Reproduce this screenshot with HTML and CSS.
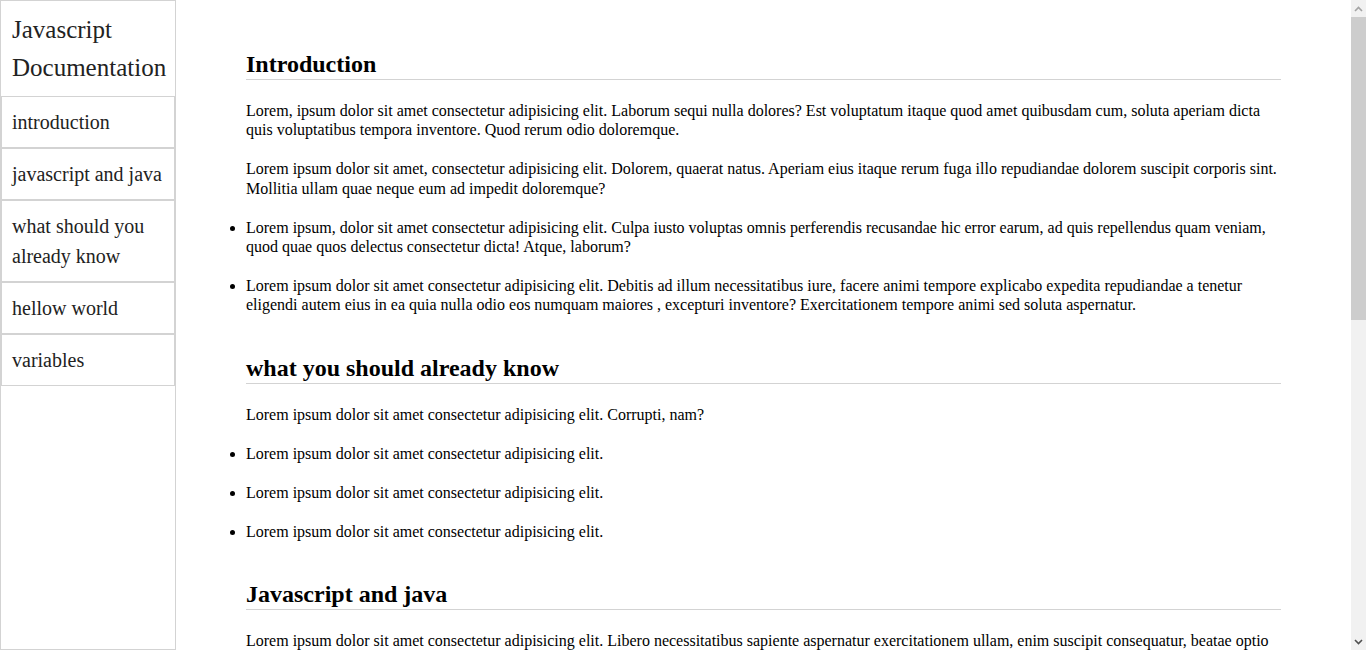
FILE: index.html
```html
<!DOCTYPE html>
<html lang="en">
<head>
<meta charset="utf-8">
<title>Javascript Documentation</title>
<link rel="stylesheet" href="styles.css">
</head>
<body>
<nav class="navbar" id="navbar">
  <header class="nav-header">Javascript Documentation</header>
  <a class="nav-link" href="#introduction">introduction</a>
  <a class="nav-link" href="#javascript_and_java">javascript and java</a>
  <a class="nav-link" href="#what_you_should_already_know">what should you already know</a>
  <a class="nav-link" href="#hellow_world">hellow world</a>
  <a class="nav-link" href="#variables">variables</a>
</nav>
<main class="main-doc" id="main-doc">
  <section class="main-section" id="introduction">
    <h2 class="section-title">Introduction</h2>
    <p>Lorem, ipsum dolor sit amet consectetur adipisicing elit. Laborum sequi nulla dolores? Est voluptatum itaque quod amet quibusdam cum, soluta aperiam dicta quis voluptatibus tempora inventore. Quod rerum odio doloremque.</p>
    <p>Lorem ipsum dolor sit amet, consectetur adipisicing elit. Dolorem, quaerat natus. Aperiam eius itaque rerum fuga illo repudiandae dolorem suscipit corporis sint. Mollitia ullam quae neque eum ad impedit doloremque?</p>
    <ul class="doc-list">
      <li>Lorem ipsum, dolor sit amet consectetur adipisicing elit. Culpa iusto voluptas omnis perferendis recusandae hic error earum, ad quis repellendus quam veniam, quod quae quos delectus consectetur dicta! Atque, laborum?</li>
      <li>Lorem ipsum dolor sit amet consectetur adipisicing elit. Debitis ad illum necessitatibus iure, facere animi tempore explicabo expedita repudiandae a tenetur eligendi autem eius in ea quia nulla odio eos numquam maiores , excepturi inventore? Exercitationem tempore animi sed soluta aspernatur.</li>
    </ul>
  </section>
  <section class="main-section" id="what_you_should_already_know">
    <h2 class="section-title">what you should already know</h2>
    <p>Lorem ipsum dolor sit amet consectetur adipisicing elit. Corrupti, nam?</p>
    <ul class="doc-list">
      <li>Lorem ipsum dolor sit amet consectetur adipisicing elit.</li>
      <li>Lorem ipsum dolor sit amet consectetur adipisicing elit.</li>
      <li>Lorem ipsum dolor sit amet consectetur adipisicing elit.</li>
    </ul>
  </section>
  <section class="main-section" id="javascript_and_java">
    <h2 class="section-title">Javascript and java</h2>
    <p>Lorem ipsum dolor sit amet consectetur adipisicing elit. Libero necessitatibus sapiente aspernatur exercitationem ullam, enim suscipit consequatur, beatae optio voluptatem quasi reiciendis nobis. Quod rerum odio doloremque, ipsam dolores minima.</p>
    <p>Lorem ipsum dolor sit amet consectetur adipisicing elit. Molestias, quos.</p>
  </section>
  <section class="main-section" id="hellow_world">
    <h2 class="section-title">hellow world</h2>
    <p>Lorem ipsum dolor sit amet consectetur adipisicing elit. Eveniet, vero dolores. Nemo facilis ex sunt.</p>
    <ul class="doc-list">
      <li>Lorem ipsum dolor sit amet consectetur adipisicing elit.</li>
      <li>Lorem ipsum dolor sit amet consectetur adipisicing elit.</li>
    </ul>
  </section>
  <section class="main-section" id="variables">
    <h2 class="section-title">variables</h2>
    <p>Lorem ipsum dolor sit amet consectetur adipisicing elit. Architecto nisi fugit rerum quibusdam iste.</p>
    <p>Lorem ipsum dolor sit amet consectetur adipisicing elit. Placeat, delectus.</p>
    <ul class="doc-list">
      <li>Lorem ipsum dolor sit amet consectetur adipisicing elit.</li>
      <li>Lorem ipsum dolor sit amet consectetur adipisicing elit.</li>
      <li>Lorem ipsum dolor sit amet consectetur adipisicing elit.</li>
    </ul>
  </section>
</main>
<div class="scrollbar" aria-hidden="true">
  <div class="scroll-btn">
    <svg width="9" height="6" viewBox="0 0 9 6"><path d="M1 5 L4.5 1.5 L8 5" fill="none" stroke="#a3a3a3" stroke-width="1.6"/></svg>
  </div>
  <div class="scroll-thumb"></div>
  <div class="scroll-track"></div>
  <div class="scroll-btn">
    <svg width="9" height="6" viewBox="0 0 9 6"><path d="M1 1 L4.5 4.5 L8 1" fill="none" stroke="#505050" stroke-width="1.6"/></svg>
  </div>
</div>
</body>
</html>
```

FILE: styles.css
```css
html, body {
  margin: 0;
  padding: 0;
}

body {
  font-family: "Liberation Serif", "Times New Roman", serif;
  font-size: 16px;
  color: #000;
  background: #fff;
}

.navbar {
  position: fixed;
  top: 0;
  left: 0;
  width: 176px;
  height: 100%;
  box-sizing: border-box;
  border: 1px solid #d3d3d3;
  display: flex;
  flex-direction: column;
  background: #fff;
}

.nav-header {
  font-size: 25px;
  line-height: 1.5;
  padding: 10px 10px 10px 11px;
  color: #222;
}

.nav-link {
  display: block;
  font-size: 20px;
  line-height: 1.5;
  padding: 10px;
  border: 1px solid #d3d3d3;
  color: #222;
  text-decoration: none;
}

.main-doc {
  margin-left: 176px;
  margin-right: 15px;
  padding: 51px 70px 80px 70px;
}

.main-section {
  margin-bottom: 40px;
}

.section-title {
  font-size: 24px;
  font-weight: bold;
  margin: 0 0 21px 0;
  padding-bottom: 1px;
  border-bottom: 1px solid #d3d3d3;
}

.main-section p {
  margin: 20px 0;
  line-height: 19.2px;
}

.doc-list {
  margin: 20px 0;
  padding: 0;
}

.doc-list li {
  margin: 20px 0;
  line-height: 19.2px;
}

.scrollbar {
  position: fixed;
  top: 0;
  right: 0;
  width: 15px;
  height: 100%;
  background: #f1f1f1;
  display: flex;
  flex-direction: column;
}

.scroll-btn {
  height: 17px;
  flex: 0 0 17px;
  display: flex;
  align-items: center;
  justify-content: center;
}

.scroll-thumb {
  flex: 0 0 303px;
  background: #cdcdcd;
}

.scroll-track {
  flex: 1 1 auto;
}
```
